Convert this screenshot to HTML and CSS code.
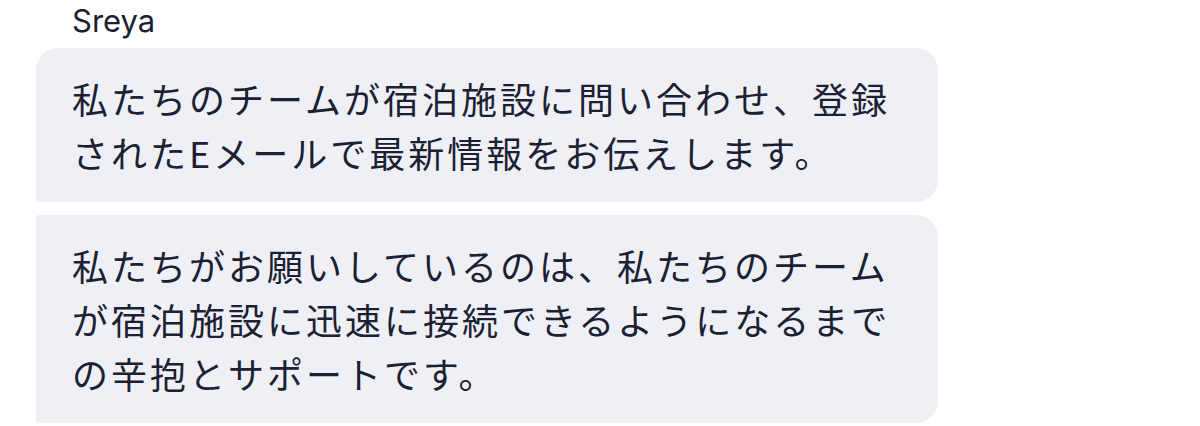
FILE: index.html
```html
<!DOCTYPE html>
<html lang="ja">
<head>
  <meta charset="UTF-8">
  <meta name="viewport" content="width=device-width, initial-scale=1.0">
  <title>Chat</title>
  <link rel="stylesheet" href="styles.css">
</head>
<body>
  <div class="thread">
    <div class="sender">Sreya</div>
    <div class="bubble first">私たちのチームが宿泊施設に問い合わせ、登録されたEメールで最新情報をお伝えします。</div>
    <div class="bubble last">私たちがお願いしているのは、私たちのチームが宿泊施設に迅速に接続できるようになるまでの辛抱とサポートです。</div>
  </div>
</body>
</html>
```

FILE: styles.css
```css
* { margin: 0; padding: 0; box-sizing: border-box; }
body {
  background: #fff;
  color: #1c2033;
  font-family: "Noto Sans CJK JP", sans-serif;
}
.thread {
  display: flex;
  flex-direction: column;
  gap: 13px;
  width: 902px;
  margin-left: 36px;
}
.sender {
  font-family: Inter, "Noto Sans", sans-serif;
  font-size: 31px;
  line-height: 40px;
  padding-left: 36px;
  margin-top: 1px;
  margin-bottom: -6px;
  color: #1c2033;
}
.bubble {
  background: #eef0f5;
  padding: 23px 36px;
  font-size: 36px;
  line-height: 54px;
  letter-spacing: 3px;
  border-radius: 22px;
}
.bubble.first {
  border-bottom-left-radius: 3px;
}
.bubble.last {
  border-top-left-radius: 3px;
  border-bottom-left-radius: 3px;
}
```
